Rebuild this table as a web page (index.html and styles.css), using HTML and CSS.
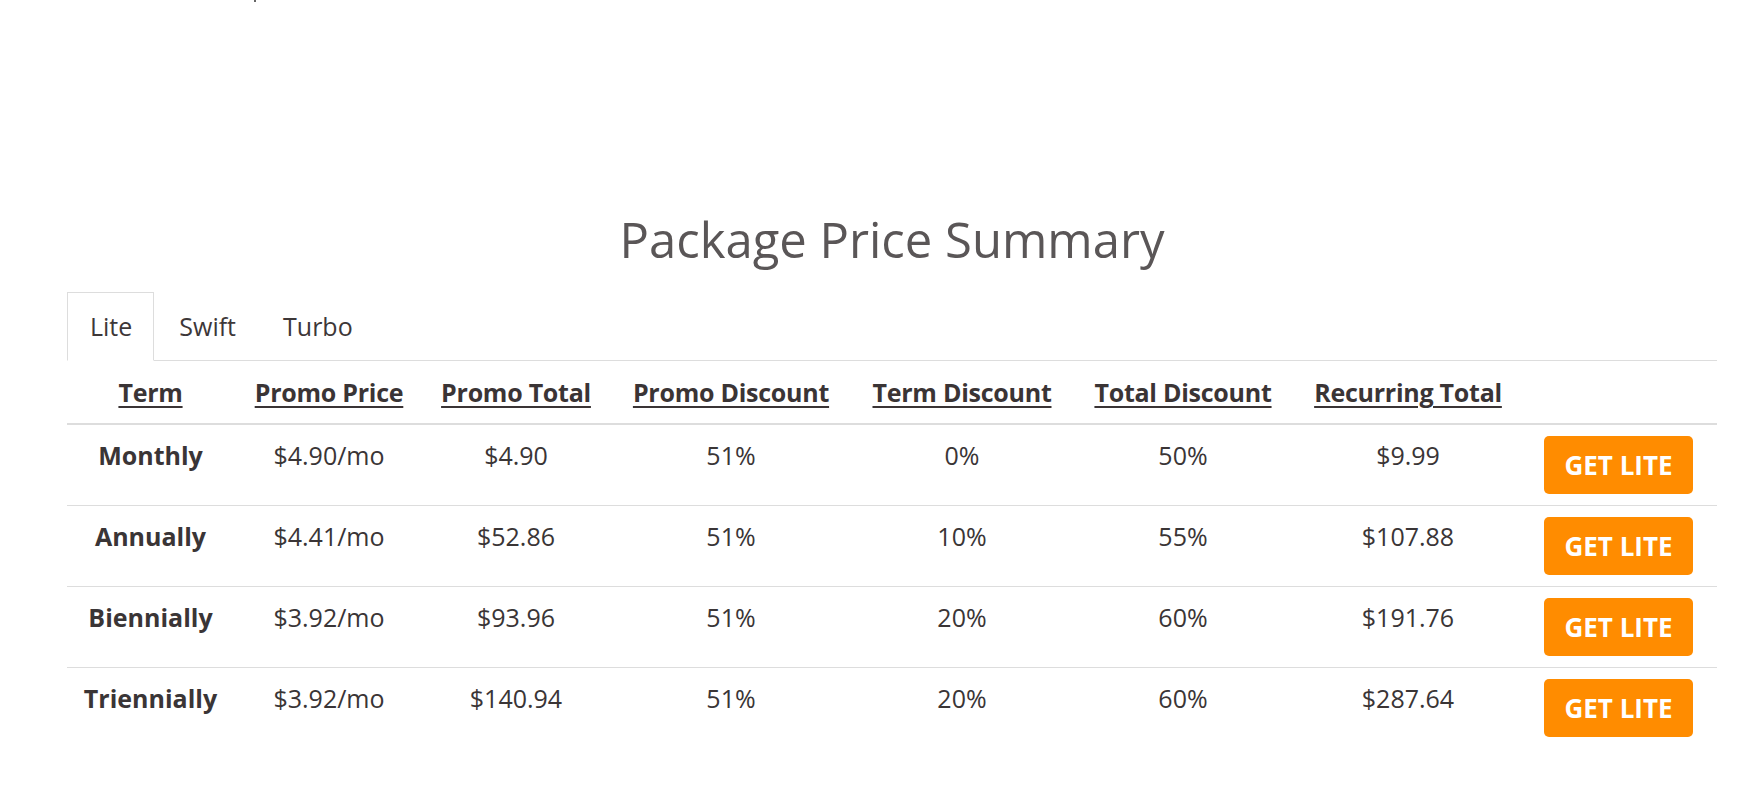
FILE: index.html
```html
<!DOCTYPE html>
<html lang="en">
<head>
<meta charset="utf-8">
<title>Package Price Summary</title>
<link rel="stylesheet" href="styles.css">
</head>
<body>
<div class="top"><span class="speck"></span></div>
<div class="wrap">
  <h2 class="title">Package Price Summary</h2>
  <ul class="tabs">
    <li class="tab active">Lite</li>
    <li class="tab">Swift</li>
    <li class="tab">Turbo</li>
  </ul>
  <table class="prices">
    <colgroup>
      <col class="c1"><col class="c2"><col class="c3"><col class="c4">
      <col class="c5"><col class="c6"><col class="c7"><col class="c8">
    </colgroup>
    <thead>
      <tr>
        <th><u>Term</u></th>
        <th><u>Promo Price</u></th>
        <th><u>Promo Total</u></th>
        <th><u>Promo Discount</u></th>
        <th><u>Term Discount</u></th>
        <th><u>Total Discount</u></th>
        <th><u>Recurring Total</u></th>
        <th></th>
      </tr>
    </thead>
    <tbody>
      <tr>
        <td class="term">Monthly</td><td>$4.90/mo</td><td>$4.90</td><td>51%</td><td>0%</td><td>50%</td><td>$9.99</td>
        <td class="btn-cell"><a class="btn">GET LITE</a></td>
      </tr>
      <tr>
        <td class="term">Annually</td><td>$4.41/mo</td><td>$52.86</td><td>51%</td><td>10%</td><td>55%</td><td>$107.88</td>
        <td class="btn-cell"><a class="btn">GET LITE</a></td>
      </tr>
      <tr>
        <td class="term">Biennially</td><td>$3.92/mo</td><td>$93.96</td><td>51%</td><td>20%</td><td>60%</td><td>$191.76</td>
        <td class="btn-cell"><a class="btn">GET LITE</a></td>
      </tr>
      <tr>
        <td class="term">Triennially</td><td>$3.92/mo</td><td>$140.94</td><td>51%</td><td>20%</td><td>60%</td><td>$287.64</td>
        <td class="btn-cell"><a class="btn">GET LITE</a></td>
      </tr>
    </tbody>
  </table>
</div>
</body>
</html>
```
FILE: styles.css
```css
html, body {
  margin: 0;
  padding: 0;
  background: #fff;
}
body {
  font-family: "Open Sans", "Noto Sans", "Liberation Sans", sans-serif;
  color: #3a3536;
  font-size: 25px;
}
.top {
  height: 3px;
  padding-left: 254px;
}
.speck {
  display: block;
  width: 2px;
  height: 2px;
  background: #666;
}
.wrap {
  margin-left: 67px;
  width: 1650px;
}
.title {
  margin: 207px 0 24px;
  font-size: 49px;
  line-height: 58px;
  font-weight: 400;
  text-align: center;
  color: #5a5657;
}
.tabs {
  display: flex;
  margin: 0;
  padding: 0;
  list-style: none;
  border-bottom: 1px solid #dddddd;
}
.tab {
  margin: 0 2px -1px 0;
  padding: 16px 21px 16px 22px;
  line-height: 35px;
  border: 1px solid transparent;
  color: #3d3738;
}
.tab.active {
  border-color: #dddddd #dddddd #ffffff;
  background: #fff;
}
.prices {
  width: 1650px;
  table-layout: fixed;
  border-collapse: collapse;
}
.c1 { width: 167px; }
.c2 { width: 190px; }
.c3 { width: 184px; }
.c4 { width: 246px; }
.c5 { width: 216px; }
.c6 { width: 226px; }
.c7 { width: 224px; }
.c8 { width: 197px; }
.prices th {
  padding: 12px 0;
  line-height: 38px;
  font-weight: 700;
  letter-spacing: -0.25px;
  text-align: center;
  vertical-align: top;
  border-bottom: 2px solid #dddddd;
  color: #3a3435;
}
.prices th u {
  text-decoration-thickness: 2px;
  text-underline-offset: 4px;
}
.prices td {
  padding: 11px 0;
  line-height: 38px;
  text-align: center;
  vertical-align: top;
  border-top: 1px solid #dddddd;
}
.prices tbody tr:first-child td {
  border-top: 0;
}
.prices td.term {
  font-weight: 700;
}
.btn {
  display: inline-block;
  padding: 10px 20px;
  line-height: 38px;
  font-size: 26px;
  font-weight: 700;
  color: #fff;
  background: #ff8c00;
  border-radius: 5px;
  text-decoration: none;
}
.btn-cell {
  padding-left: 7px;
}
```
